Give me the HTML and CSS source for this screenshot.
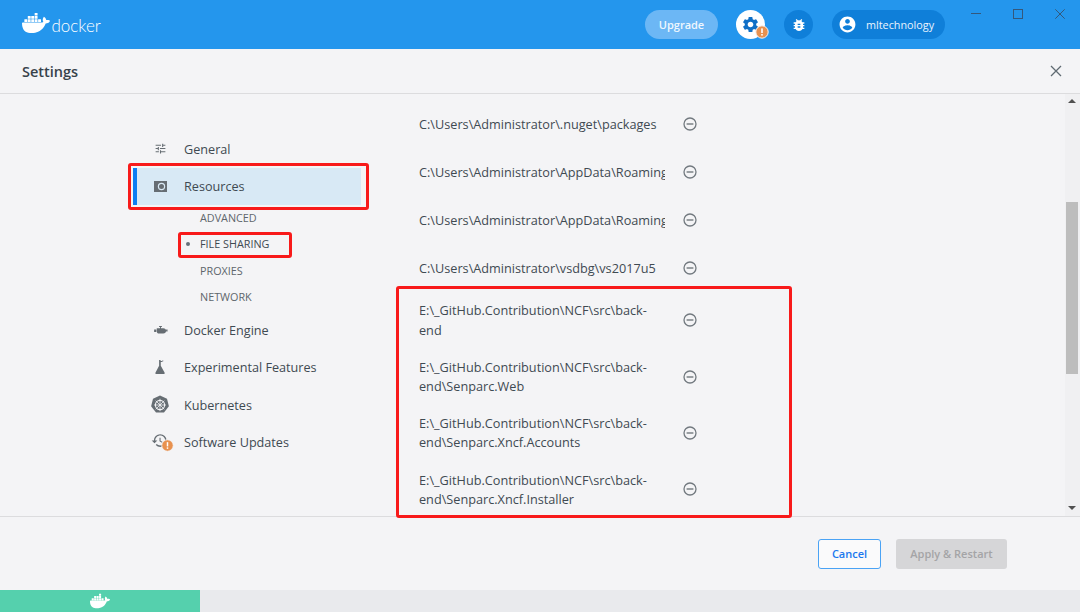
FILE: index.html
```html
<!DOCTYPE html>
<html lang="en">
<head>
<meta charset="utf-8">
<title>Docker Settings</title>
<link rel="stylesheet" href="styles.css">
</head>
<body>
<svg class="defs" width="0" height="0" aria-hidden="true">
  <symbol id="whale" viewBox="0 0 24 24"><path d="M13.983 11.078h2.119a.186.186 0 00.186-.185V9.006a.186.186 0 00-.186-.186h-2.119a.185.185 0 00-.185.185v1.888c0 .102.083.185.185.185m-2.954-5.43h2.118a.186.186 0 00.186-.186V3.574a.186.186 0 00-.186-.185h-2.118a.185.185 0 00-.185.185v1.888c0 .102.082.185.185.186m0 2.716h2.118a.187.187 0 00.186-.186V6.29a.186.186 0 00-.186-.185h-2.118a.185.185 0 00-.185.185v1.887c0 .102.082.185.185.186m-2.93 0h2.12a.186.186 0 00.184-.186V6.29a.185.185 0 00-.185-.185H8.1a.185.185 0 00-.185.185v1.887c0 .102.083.185.185.186m-2.964 0h2.119a.186.186 0 00.185-.186V6.29a.185.185 0 00-.185-.185H5.136a.186.186 0 00-.186.185v1.887c0 .102.084.185.186.186m5.893 2.715h2.118a.186.186 0 00.186-.185V9.006a.186.186 0 00-.186-.186h-2.118a.185.185 0 00-.185.185v1.888c0 .102.082.185.185.185m-2.93 0h2.12a.185.185 0 00.184-.185V9.006a.185.185 0 00-.184-.186h-2.12a.185.185 0 00-.184.185v1.888c0 .102.083.185.185.185m-2.964 0h2.119a.185.185 0 00.185-.185V9.006a.185.185 0 00-.184-.186h-2.12a.186.186 0 00-.186.186v1.887c0 .102.084.185.186.185m-2.92 0h2.12a.185.185 0 00.184-.185V9.006a.185.185 0 00-.184-.186h-2.12a.185.185 0 00-.184.185v1.888c0 .102.082.185.185.185M23.763 9.89c-.065-.051-.672-.51-1.954-.51-.338.001-.676.03-1.01.087-.248-1.7-1.653-2.53-1.716-2.566l-.344-.199-.226.327c-.284.438-.49.922-.612 1.43-.23.97-.09 1.882.403 2.661-.595.332-1.55.413-1.744.42H.751a.751.751 0 00-.75.748 11.376 11.376 0 00.692 4.062c.545 1.428 1.355 2.48 2.41 3.124 1.18.723 3.1 1.137 5.275 1.137.983.003 1.963-.086 2.93-.266a12.248 12.248 0 003.823-1.389c.98-.567 1.86-1.288 2.61-2.136 1.252-1.418 1.998-2.997 2.553-4.4h.221c1.372 0 2.215-.549 2.68-1.009.309-.293.55-.65.707-1.046l.098-.288Z"/></symbol>
  <symbol id="minus" viewBox="0 0 14 14"><circle cx="7" cy="7" r="6" fill="none" stroke="currentColor" stroke-width="1.3"/><rect x="3.6" y="6.3" width="6.8" height="1.4" fill="currentColor"/></symbol>
  <symbol id="warn" viewBox="0 0 14 14"><circle cx="7" cy="7" r="6.2" fill="#e8914f" stroke="#f4f4f6" stroke-width="1"/><rect x="6.2" y="3.4" width="1.6" height="4.6" fill="#fff"/><rect x="6.2" y="9" width="1.6" height="1.6" fill="#fff"/></symbol>
</svg>

<header class="topbar">
  <div class="brand">
    <svg class="brand-whale"><use href="#whale"/></svg>
    <span class="brand-name">docker</span>
  </div>
  <div class="top-actions">
    <span class="upgrade">Upgrade</span>
    <span class="round round-white">
      <svg class="gear" viewBox="0 0 24 24"><path d="M19.14 12.94c.04-.3.06-.61.06-.94 0-.32-.02-.64-.07-.94l2.03-1.58a.49.49 0 0 0 .12-.61l-1.92-3.32a.488.488 0 0 0-.59-.22l-2.39.96c-.5-.38-1.03-.7-1.62-.94l-.36-2.54a.484.484 0 0 0-.48-.41h-3.84c-.24 0-.43.17-.47.41l-.36 2.54c-.59.24-1.13.57-1.62.94l-2.39-.96c-.22-.08-.47 0-.59.22L2.74 8.87c-.12.21-.08.47.12.61l2.03 1.58c-.05.3-.09.63-.09.94s.02.64.07.94l-2.03 1.58a.49.49 0 0 0-.12.61l1.92 3.32c.12.22.37.29.59.22l2.39-.96c.5.38 1.03.7 1.62.94l.36 2.54c.05.24.24.41.48.41h3.84c.24 0 .44-.17.47-.41l.36-2.54c.59-.24 1.13-.56 1.62-.94l2.39.96c.22.08.47 0 .59-.22l1.92-3.32c.12-.22.07-.47-.12-.61l-2.01-1.58zM12 15.6c-1.98 0-3.6-1.62-3.6-3.6s1.62-3.6 3.6-3.6 3.6 1.62 3.6 3.6-1.62 3.6-3.6 3.6z"/></svg>
      <svg class="gear-badge"><use href="#warn"/></svg>
    </span>
    <span class="round round-blue">
      <svg class="bug" viewBox="0 0 24 24"><path d="M20 8h-2.81c-.45-.78-1.07-1.45-1.82-1.96L17 4.41 15.59 3l-2.17 2.17C12.96 5.06 12.49 5 12 5c-.49 0-.96.06-1.41.17L8.41 3 7 4.41l1.62 1.63C7.88 6.55 7.26 7.22 6.81 8H4v2h2.09c-.05.33-.09.66-.09 1v1H4v2h2v1c0 .34.04.67.09 1H4v2h2.81c1.04 1.79 2.97 3 5.19 3s4.15-1.21 5.19-3H20v-2h-2.09c.05-.33.09-.66.09-1v-1h2v-2h-2v-1c0-.34-.04-.67-.09-1H20V8zm-6 8h-4v-2h4v2zm0-4h-4v-2h4v2z"/></svg>
    </span>
    <span class="user">
      <svg class="avatar" viewBox="0 0 24 24"><path d="M12 2C6.48 2 2 6.48 2 12s4.48 10 10 10 10-4.48 10-10S17.52 2 12 2zm0 3c1.66 0 3 1.34 3 3s-1.34 3-3 3-3-1.34-3-3 1.34-3 3-3zm0 14.2c-2.5 0-4.71-1.28-6-3.22.03-1.99 4-3.08 6-3.08 1.99 0 5.97 1.09 6 3.08-1.29 1.94-3.5 3.22-6 3.22z"/></svg>
      <span>mltechnology</span>
    </span>
  </div>
  <div class="window-controls">
    <svg class="win" viewBox="0 0 10 10"><path d="M0 4.500h10"/></svg>
    <svg class="win" viewBox="0 0 10 10"><rect x=".5" y=".5" width="9" height="9"/></svg>
    <svg class="win" viewBox="0 0 10 10"><path d="M.3.3l9.400 9.400M9.700.3L.3 9.700"/></svg>
  </div>
</header>

<div class="titlebar">
  <h1 class="title">Settings</h1>
  <svg class="title-close" viewBox="0 0 12 12"><path d="M1 1l10 10M11 1L1 11"/></svg>
</div>

<main class="content">
  <nav class="sidebar">
    <a class="nav-item">
      <svg class="nav-icon icon-tune" viewBox="0 0 24 24"><path d="M3 17v2h6v-2H3zM3 5v2h10V5H3zm10 16v-2h8v-2h-8v-2h-2v6h2zM7 9v2H3v2h4v2h2V9H7zm14 4v-2H11v2h10zm-6-4h2V7h4V5h-4V3h-2v6z"/></svg>
      <span>General</span>
    </a>
    <a class="nav-item nav-active">
      <svg class="nav-icon" viewBox="0 0 15 15"><path fill-rule="evenodd" d="M1 2h13v11H1zM8.500 3.800a3.700 3.700 0 100 7.400 3.700 3.700 0 000-7.400zM8.500 5a2.500 2.500 0 110 5 2.500 2.500 0 010-5z"/></svg>
      <span>Resources</span>
    </a>
    <ul class="subnav">
      <li>ADVANCED</li>
      <li class="sub-active">FILE SHARING</li>
      <li>PROXIES</li>
      <li>NETWORK</li>
    </ul>
    <a class="nav-item">
      <svg class="nav-icon" viewBox="0 0 16 16"><path d="M4 5.500h7c1.800 0 3 1 3 2.700s-1.200 3-3 3H6.500c-1.500 0-2.500-1-2.500-2.500zM1.200 6.800h2.300v2.900H1.200zM14 7h1.500v2H14zM6.500 3.300h3v1h-1v1.200h-1V4.300h-1z"/></svg>
      <span>Docker Engine</span>
    </a>
    <a class="nav-item">
      <svg class="nav-icon" viewBox="0 0 16 16"><path d="M6.500 0h1.600v1H10v1.200H8.300v4l4 7c.4.800 0 1.800-.9 1.800H3.600c-.9 0-1.300-1-.9-1.800l3.800-7zM9.800.4h1.200v1H9.800z"/></svg>
      <span>Experimental Features</span>
    </a>
    <a class="nav-item">
      <svg class="nav-icon icon-k8s" viewBox="0 0 20 20"><path d="M10 .4l7 3.300 1.900 7.600-4.900 6.300H6l-4.900-6.300L3 3.700z"/><circle cx="10" cy="10" r="4.600" fill="none" stroke="#f4f4f6" stroke-width="1.100"/><path d="M10 3.800v12.400M4 10h12M5.700 5.700l8.600 8.600M14.300 5.700l-8.600 8.600" stroke="#f4f4f6" stroke-width=".8"/></svg>
      <span>Kubernetes</span>
    </a>
    <a class="nav-item">
      <span class="update-icon">
        <svg class="nav-icon" viewBox="0 0 24 24"><path d="M13 3a9 9 0 0 0-9 9H1l3.890 3.890.07.14L9 12H6c0-3.870 3.130-7 7-7s7 3.130 7 7-3.130 7-7 7c-1.930 0-3.680-.79-4.940-2.060l-1.420 1.420A8.954 8.954 0 0 0 13 21a9 9 0 0 0 0-18zm-1 5v5l4.280 2.540.72-1.210-3.500-2.080V8H12z"/></svg>
        <svg class="update-badge"><use href="#warn"/></svg>
      </span>
      <span>Software Updates</span>
    </a>
  </nav>

  <section class="shares">
    <div class="share"><span class="path">C:\Users\Administrator\.nuget\packages</span><svg class="remove"><use href="#minus"/></svg></div>
    <div class="share"><span class="path path-clip">C:\Users\Administrator\AppData\Roaming\Microsoft</span><svg class="remove"><use href="#minus"/></svg></div>
    <div class="share"><span class="path path-clip">C:\Users\Administrator\AppData\Roaming\NuGet</span><svg class="remove"><use href="#minus"/></svg></div>
    <div class="share"><span class="path">C:\Users\Administrator\vsdbg\vs2017u5</span><svg class="remove"><use href="#minus"/></svg></div>
    <div class="share"><span class="path">E:\_GitHub.Contribution\NCF\src\back-end</span><svg class="remove"><use href="#minus"/></svg></div>
    <div class="share"><span class="path">E:\_GitHub.Contribution\NCF\src\back-end\Senparc.Web</span><svg class="remove"><use href="#minus"/></svg></div>
    <div class="share"><span class="path">E:\_GitHub.Contribution\NCF\src\back-end\Senparc.Xncf.Accounts</span><svg class="remove"><use href="#minus"/></svg></div>
    <div class="share"><span class="path">E:\_GitHub.Contribution\NCF\src\back-end\Senparc.Xncf.Installer</span><svg class="remove"><use href="#minus"/></svg></div>
  </section>

  <div class="scrollbar">
    <span class="arrow-up"></span>
    <span class="thumb"></span>
    <span class="arrow-down"></span>
  </div>
</main>

<footer class="actions">
  <button class="btn btn-cancel">Cancel</button>
  <button class="btn btn-apply">Apply &amp; Restart</button>
</footer>

<div class="statusbar">
  <div class="status-progress"><svg class="status-whale"><use href="#whale"/></svg></div>
</div>

<div class="mark mark-resources"></div>
<div class="mark mark-sharing"></div>
<div class="mark mark-list"></div>
</body>
</html>
```
FILE: styles.css
```css
* { box-sizing: border-box; }
html, body { margin: 0; padding: 0; }
body {
  position: relative;
  width: 1080px;
  height: 612px;
  overflow: hidden;
  display: flex;
  flex-direction: column;
  background: #f4f4f6;
  color: #3f4a52;
  font-family: "Open Sans", "Liberation Sans", sans-serif;
  font-size: 12.65px;
}
.defs { position: absolute; }

.topbar {
  height: 49px;
  flex: none;
  display: flex;
  background: #2496ed;
  color: #fff;
}
.brand { display: flex; align-items: center; padding-left: 22px; width: 645px; }
.brand-whale { width: 28px; height: 28px; fill: #fff; margin-top: -4px; }
.brand-name {
  font-family: "Lato", sans-serif;
  font-weight: 300;
  font-size: 17px;
  margin-left: 1.5px;
  margin-top: 2px;
}
.top-actions { display: flex; align-items: center; height: 49px; width: 326px; flex: none; }
.upgrade {
  width: 73px;
  height: 29px;
  border-radius: 15px;
  background: #6cb7f5;
  color: #f0f7fe;
  font-size: 11px;
  font-weight: 600;
  display: flex;
  align-items: center;
  justify-content: center;
  margin-right: 18px;
}
.round {
  position: relative;
  width: 29px;
  height: 29px;
  border-radius: 50%;
  display: flex;
  align-items: center;
  justify-content: center;
}
.round-white { background: #fff; margin-right: 19px; }
.round-blue { background: #0f7fd9; margin-right: 19px; }
.gear { width: 19px; height: 19px; fill: #0f6fc6; }
.gear-badge { position: absolute; left: 19px; top: 15px; width: 14px; height: 14px; }
.bug { width: 16px; height: 16px; fill: #fff; }
.user {
  width: 113px;
  height: 29px;
  border-radius: 15px;
  background: #0f7fd9;
  display: flex;
  align-items: center;
  padding-left: 6px;
  font-size: 10.8px;
  font-weight: 500;
  color: #eaf4fd;
}
.avatar { width: 19px; height: 19px; fill: #fff; margin-right: 9px; flex: none; }
.window-controls { display: flex; flex: 1; gap: 32px; padding-top: 9px; align-items: flex-start; }
.win { width: 10px; height: 10px; fill: none; stroke: #34587c; stroke-width: 1; flex: none; }

.titlebar {
  height: 45px;
  flex: none;
  display: flex;
  align-items: center;
  justify-content: space-between;
  padding: 0 18px 0 22px;
  border-bottom: 1px solid #dcdcde;
}
.title { margin: 0; font-size: 14.5px; font-weight: 600; color: #37424a; }
.title-close { width: 12px; height: 12px; fill: none; stroke: #5f6a72; stroke-width: 1.3; }

.content { flex: 1; min-height: 0; display: flex; overflow: hidden; }
.sidebar { width: 228px; margin-left: 133px; margin-right: 58px; padding-top: 36.2px; flex: none; }
.nav-item {
  display: flex;
  align-items: center;
  height: 37.33px;
  padding-left: 20px;
  color: #3f4a52;
}
.nav-icon { width: 15px; height: 15px; fill: #666d73; margin-right: 16px; flex: none; }
.icon-tune { width: 13px; height: 13px; margin-left: 1px; margin-right: 17px; }
.icon-k8s { width: 20px; height: 20px; margin-left: -3px; margin-right: 14px; }
.nav-active { background: #d8e9f5; border-left: 4px solid #0d7df2; padding-left: 16px; }
.update-icon { position: relative; display: flex; flex: none; }
.update-icon .nav-icon { width: 17px; height: 17px; margin-left: -2px; margin-top: -4px; margin-right: 16px; }
.update-badge { position: absolute; left: 8px; top: 3px; width: 13px; height: 13px; }
.subnav { list-style: none; margin: -.6px 0 0; padding: 0 0 1.9px 67px; font-size: 10.8px; color: #5e666c; }
.subnav li { height: 26.33px; display: flex; align-items: center; position: relative; }
.sub-active { color: #3f4a52; }
.sub-active::before {
  content: "";
  position: absolute;
  left: -14px;
  top: 11px;
  width: 4px;
  height: 4px;
  border-radius: 50%;
  background: #66707a;
}

.shares { width: 279px; padding-top: 6.4px; flex: none; font-size: 12.7px; }
.share { display: flex; align-items: center; min-height: 48px; padding: 9px 0; line-height: 19.2px; }
.path { width: 246px; flex: none; overflow-wrap: anywhere; }
.path-clip { white-space: nowrap; overflow: hidden; }
.remove { width: 14px; height: 14px; margin-left: 18px; color: #72797f; flex: none; position: relative; top: -.5px; }

.scrollbar {
  position: relative;
  width: 15px;
  margin-left: auto;
  background: #f0f0f2;
  flex: none;
}
.arrow-up, .arrow-down {
  position: absolute;
  left: 3px;
  width: 0;
  height: 0;
  border-left: 4px solid transparent;
  border-right: 4px solid transparent;
}
.arrow-up { top: 5px; border-bottom: 4px solid #505050; }
.arrow-down { bottom: 6px; border-top: 4px solid #505050; }
.thumb { position: absolute; left: 1px; top: 108px; width: 12px; height: 172px; background: #bdbdbd; }

.actions {
  height: 74px;
  flex: none;
  display: flex;
  align-items: center;
  gap: 15px;
  padding: 0 73px 0 818px;
  border-top: 1px solid #dcdcde;
}
.btn {
  height: 30px;
  border-radius: 3px;
  font-family: inherit;
  font-size: 11px;
  font-weight: 600;
  padding: 0;
  flex: none;
}
.btn-cancel { width: 63px; background: #fafafb; border: 1px solid #4aa3f5; color: #1b78ee; }
.btn-apply { width: 111px; background: #d6d6d8; border: 0; color: #a4a4a6; }

.statusbar { height: 22px; flex: none; background: #e9eaed; }
.status-progress { width: 200px; height: 22px; background: #55d0ad; display: flex; justify-content: center; padding-top: 1px; }
.status-whale { width: 20px; height: 20px; fill: #fff; }

.mark { position: absolute; border: 3px solid #f81a1a; border-radius: 3px; }
.mark-resources { left: 128px; top: 163px; width: 241px; height: 47px; }
.mark-sharing { left: 178px; top: 232px; width: 114px; height: 26px; }
.mark-list { left: 396px; top: 286px; width: 396px; height: 232px; }
```
